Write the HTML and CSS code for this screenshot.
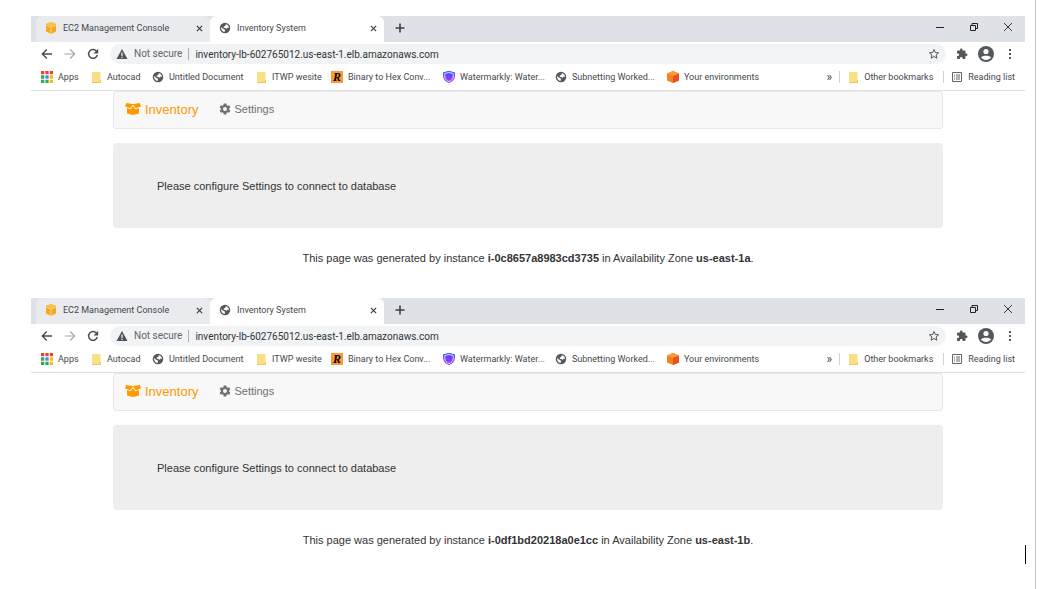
FILE: index.html
```html
<!DOCTYPE html>
<html lang="en">
<head>
<meta charset="utf-8">
<title>Inventory System</title>
<link rel="stylesheet" href="styles.css">
</head>
<body>
<svg class="sprite" aria-hidden="true">
  <symbol id="aws" viewBox="0 0 12 12"><path fill="#f6a821" d="M6 0l5 2v7.500L6 12 1 9.500V2z"/><path fill="#fcc14c" d="M6 0l5 2-5 2-5-2z"/><path fill="none" stroke="#fff" stroke-width=".5" d="M1 3l5 2 5-2M6 5v7"/></symbol>
  <symbol id="globe" viewBox="0 0 24 24"><path fill="#55595e" d="M12 1.500a10.500 10.500 0 1 0 0 21 10.500 10.500 0 0 0 0-21z"/><path fill="#fff" d="M14 4.500c4 1 6 4 6 7.500l-2.500-1-2 2.500-3-1.500-3-.5V9l3-1 .5-2zM4 10l5 4 2 .5 1 2.500-1 3C6.500 19.500 3.500 15 4 10z"/></symbol>
  <symbol id="folder" viewBox="0 0 12 12"><path fill="#fbdf85" d="M2 1h8.500v8H11v3H2z"/><path fill="#efc75e" d="M2 11h9v1H2zM10 9h1v3h-1z"/></symbol>
  <symbol id="apps" viewBox="0 0 11 11"><path fill="#ea4335" d="M0 0h3v3H0zM4 0h3v3H4zM8 0h3v3H8z"/><path fill="#34a853" d="M0 4h3v3H0zM0 8h3v3H0z"/><path fill="#4285f4" d="M4 4h3v3H4z"/><path fill="#fbbc05" d="M8 4h3v3H8zM8 8h3v3H8z"/><path fill="#34a853" d="M4 8h3v3H4z"/></symbol>
  <symbol id="shield" viewBox="0 0 12 12"><path fill="#8b3df2" d="M6 0l5.800 1.500V6C11.500 9 9 11 6 12 3 11 .5 9 .2 6V1.500z"/><path fill="#4a4cf5" d="M6 0l5.800 1.500V5H.2V1.500z"/><path fill="none" stroke="#fff" stroke-width=".8" d="M6 1.500l4.200 1V6C10 8 8.500 9.700 6 10.500 3.500 9.700 2 8 1.800 6V2.500z"/></symbol>
  <symbol id="cube" viewBox="0 0 12 12"><path fill="#f58220" d="M6 0l6 2.500v7L6 12 0 9.500v-7z"/><path fill="#fa9a3c" d="M6 0l6 2.500L6 5 0 2.500z"/><path fill="#e8521c" d="M6 5l6-2.500v7L6 12z"/></symbol>
  <symbol id="list" viewBox="0 0 12 12"><path fill="none" stroke="#62666b" d="M1.500 1.500h9v9h-9z"/><path stroke="#62666b" d="M3 4h1M5 4h4M3 6h1M5 6h4M3 8h1M5 8h4"/></symbol>
  <symbol id="x" viewBox="0 0 8 8"><path stroke="#3c4043" stroke-width="1.400" d="M1 1l6 6M7 1L1 7"/></symbol>
  <symbol id="plus" viewBox="0 0 10 10"><path stroke="#3c4043" stroke-width="1.600" d="M5 .5v9M.5 5h9"/></symbol>
  <symbol id="min" viewBox="0 0 10 10"><path stroke="#222" d="M1 5.500h8"/></symbol>
  <symbol id="restore" viewBox="0 0 10 10"><path fill="none" stroke="#222" d="M1.500 3.500h5v5h-5zM3 3V1.500h5.500v5H7"/></symbol>
  <symbol id="close" viewBox="0 0 10 10"><path stroke="#222" stroke-width=".9" d="M1 1l8 8M9 1L1 9"/></symbol>
  <symbol id="back" viewBox="0 0 12 12"><path fill="none" stroke="currentColor" stroke-width="1.400" d="M11 6H1.500M5.800 1.500L1.300 6l4.500 4.500"/></symbol>
  <symbol id="fwd" viewBox="0 0 12 12"><path fill="none" stroke="currentColor" stroke-width="1.200" d="M.5 6h10M6.200 1.500L10.700 6l-4.500 4.500"/></symbol>
  <symbol id="reload" viewBox="0 0 12 12"><path fill="none" stroke="#4a4d51" stroke-width="1.500" d="M9.700 3.500A4.400 4.400 0 1 0 10.300 7"/><path fill="#4a4d51" d="M11.200.8v4.700H6.500z"/></symbol>
  <symbol id="warn" viewBox="0 0 12 12"><path fill="#4f5358" d="M6 1l5.500 10H.5z"/><path fill="#f1f3f4" d="M5.400 4.500h1.200V8H5.400zM5.400 8.700h1.200v1.200H5.400z"/></symbol>
  <symbol id="star" viewBox="0 0 12 12"><path fill="none" stroke="#54585d" d="M6 1.500l1.300 3 3.300.3-2.500 2.100.8 3.300L6 8.500l-2.900 1.700.8-3.300L1.400 4.800l3.300-.3z"/></symbol>
  <symbol id="puzzle" viewBox="0 0 24 24"><path fill="#54585d" d="M20.500 11H19V7a2 2 0 0 0-2-2h-4V3.500a2.500 2.500 0 0 0-5 0V5H4a2 2 0 0 0-2 2v3.800h1.500a2.700 2.700 0 0 1 0 5.400H2V20c0 1.100.9 2 2 2h3.800v-1.500a2.700 2.700 0 0 1 5.400 0V22H17a2 2 0 0 0 2-2v-4h1.500a2.500 2.500 0 0 0 0-5z"/></symbol>
  <symbol id="user" viewBox="0 0 16 16"><circle cx="8" cy="8" r="8" fill="#54585d"/><circle cx="8" cy="5.500" r="2.600" fill="#fff"/><path fill="#fff" d="M3 11.500c1-2.500 9-2.500 10 0-2.500 3.200-7.500 3.200-10 0z"/></symbol>
  <symbol id="dots" viewBox="0 0 12 12"><path fill="#54585d" d="M5 1h2v2H5zM5 5h2v2H5zM5 9h2v2H5z"/></symbol>
  <symbol id="box" viewBox="0 0 16 12"><path fill="#ff9900" d="M1.200 0L8 1l6.800-1L16 3.500l-5.300 1.700L8 1.500 5.300 5.200 0 3.500zM2 5l3.700 1.200L8 3l2.300 3.200L14 5v5.500L8 12l-6-1.500z"/></symbol>
  <symbol id="gear" viewBox="0 0 24 24"><path fill="#707070" fill-rule="evenodd" d="M9.500 1h5l.6 3.200 2 1.200 3.100-1.100 2.500 4.300-2.500 2.200v2.400l2.500 2.200-2.500 4.300-3.100-1.100-2 1.200-.6 3.200h-5l-.6-3.200-2-1.200-3.100 1.100-2.500-4.300 2.500-2.200v-2.400L1.300 8.600l2.500-4.300 3.100 1.100 2-1.200zM12 8a4 4 0 1 0 0 8 4 4 0 0 0 0-8z"/></symbol>
</svg>

<main class="document">
  <section class="browser">
    <div class="tabs">
      <div class="tab"><svg class="icon"><use href="#aws"/></svg><span class="tab-title">EC2 Management Console</span><button class="tab-close" aria-label="Close tab"><svg><use href="#x"/></svg></button></div>
      <div class="tab active"><svg class="icon"><use href="#globe"/></svg><span class="tab-title">Inventory System</span><button class="tab-close" aria-label="Close tab"><svg><use href="#x"/></svg></button></div>
      <button class="new-tab" aria-label="New tab"><svg><use href="#plus"/></svg></button>
      <div class="controls">
        <button aria-label="Minimize"><svg><use href="#min"/></svg></button><button aria-label="Restore"><svg><use href="#restore"/></svg></button><button aria-label="Close"><svg><use href="#close"/></svg></button>
      </div>
    </div>
    <div class="toolbar">
      <button class="nav-button" aria-label="Back"><svg class="icon"><use href="#back"/></svg></button>
      <button class="nav-button faded" aria-label="Forward"><svg class="icon"><use href="#fwd"/></svg></button>
      <button class="nav-button" aria-label="Reload"><svg class="icon"><use href="#reload"/></svg></button>
      <div class="address">
        <svg class="icon"><use href="#warn"/></svg><span class="secure">Not secure</span>
        <input class="url" aria-label="Address" value="inventory-lb-602765012.us-east-1.elb.amazonaws.com">
        <button aria-label="Bookmark"><svg class="icon"><use href="#star"/></svg></button>
      </div>
      <div class="actions">
        <button aria-label="Extensions"><svg class="icon"><use href="#puzzle"/></svg></button><button aria-label="Profile"><svg class="avatar"><use href="#user"/></svg></button><button aria-label="Menu"><svg class="icon"><use href="#dots"/></svg></button>
      </div>
    </div>
    <nav class="bookmarks" aria-label="Bookmarks">
      <div class="bookmark-list">
        <a href="#"><svg class="icon"><use href="#apps"/></svg>Apps</a>
        <a href="#"><svg class="icon"><use href="#folder"/></svg>Autocad</a>
        <a href="#"><svg class="icon"><use href="#globe"/></svg>Untitled Document</a>
        <a href="#"><svg class="icon"><use href="#folder"/></svg>ITWP wesite</a>
        <a href="#"><span class="r-icon">R</span>Binary to Hex Conv...</a>
        <a href="#"><svg class="icon"><use href="#shield"/></svg>Watermarkly: Water...</a>
        <a href="#"><svg class="icon"><use href="#globe"/></svg>Subnetting Worked...</a>
        <a href="#"><svg class="icon"><use href="#cube"/></svg>Your environments</a>
      </div>
      <button class="more" aria-label="More bookmarks">»</button>
      <a class="divided other" href="#"><svg class="icon"><use href="#folder"/></svg>Other bookmarks</a>
      <a class="divided" href="#"><svg class="icon"><use href="#list"/></svg>Reading list</a>
    </nav>
    <div class="page">
      <nav class="navbar"><a class="brand" href="#"><svg><use href="#box"/></svg>Inventory</a><a class="settings" href="#"><svg class="icon"><use href="#gear"/></svg>Settings</a></nav>
      <div class="notice">Please configure Settings to connect to database</div>
      <p class="generated">This page was generated by instance <b>i-0c8657a8983cd3735</b> in Availability Zone <b>us-east-1a</b>.</p>
    </div>
  </section>

  <section class="browser">
    <div class="tabs">
      <div class="tab"><svg class="icon"><use href="#aws"/></svg><span class="tab-title">EC2 Management Console</span><button class="tab-close" aria-label="Close tab"><svg><use href="#x"/></svg></button></div>
      <div class="tab active"><svg class="icon"><use href="#globe"/></svg><span class="tab-title">Inventory System</span><button class="tab-close" aria-label="Close tab"><svg><use href="#x"/></svg></button></div>
      <button class="new-tab" aria-label="New tab"><svg><use href="#plus"/></svg></button>
      <div class="controls">
        <button aria-label="Minimize"><svg><use href="#min"/></svg></button><button aria-label="Restore"><svg><use href="#restore"/></svg></button><button aria-label="Close"><svg><use href="#close"/></svg></button>
      </div>
    </div>
    <div class="toolbar">
      <button class="nav-button" aria-label="Back"><svg class="icon"><use href="#back"/></svg></button>
      <button class="nav-button faded" aria-label="Forward"><svg class="icon"><use href="#fwd"/></svg></button>
      <button class="nav-button" aria-label="Reload"><svg class="icon"><use href="#reload"/></svg></button>
      <div class="address">
        <svg class="icon"><use href="#warn"/></svg><span class="secure">Not secure</span>
        <input class="url" aria-label="Address" value="inventory-lb-602765012.us-east-1.elb.amazonaws.com">
        <button aria-label="Bookmark"><svg class="icon"><use href="#star"/></svg></button>
      </div>
      <div class="actions">
        <button aria-label="Extensions"><svg class="icon"><use href="#puzzle"/></svg></button><button aria-label="Profile"><svg class="avatar"><use href="#user"/></svg></button><button aria-label="Menu"><svg class="icon"><use href="#dots"/></svg></button>
      </div>
    </div>
    <nav class="bookmarks" aria-label="Bookmarks">
      <div class="bookmark-list">
        <a href="#"><svg class="icon"><use href="#apps"/></svg>Apps</a>
        <a href="#"><svg class="icon"><use href="#folder"/></svg>Autocad</a>
        <a href="#"><svg class="icon"><use href="#globe"/></svg>Untitled Document</a>
        <a href="#"><svg class="icon"><use href="#folder"/></svg>ITWP wesite</a>
        <a href="#"><span class="r-icon">R</span>Binary to Hex Conv...</a>
        <a href="#"><svg class="icon"><use href="#shield"/></svg>Watermarkly: Water...</a>
        <a href="#"><svg class="icon"><use href="#globe"/></svg>Subnetting Worked...</a>
        <a href="#"><svg class="icon"><use href="#cube"/></svg>Your environments</a>
      </div>
      <button class="more" aria-label="More bookmarks">»</button>
      <a class="divided other" href="#"><svg class="icon"><use href="#folder"/></svg>Other bookmarks</a>
      <a class="divided" href="#"><svg class="icon"><use href="#list"/></svg>Reading list</a>
    </nav>
    <div class="page">
      <nav class="navbar"><a class="brand" href="#"><svg><use href="#box"/></svg>Inventory</a><a class="settings" href="#"><svg class="icon"><use href="#gear"/></svg>Settings</a></nav>
      <div class="notice">Please configure Settings to connect to database</div>
      <p class="generated">This page was generated by instance <b>i-0df1bd20218a0e1cc</b> in Availability Zone <b>us-east-1b</b>.</p>
    </div>
  </section>
  <span class="caret"></span>
</main>
</body>
</html>
```

FILE: styles.css
```css
* { box-sizing: border-box; }
body { margin: 0; background: #fff; font-family: Roboto, "Open Sans", sans-serif; font-size: 9px; color: #45484c; }
a { color: inherit; text-decoration: none; }
button { display: flex; align-items: center; justify-content: center; padding: 0; border: 0; background: none; color: inherit; font: inherit; }
svg { display: block; flex: none; }
.sprite { position: absolute; width: 0; height: 0; }
.icon { width: 12px; height: 12px; }

.document { position: relative; min-height: 100vh; margin-right: 25px; padding: 16px 10px 0 31px; border-right: 1px solid #c3c3c3; }
.browser { margin-bottom: 32px; }
.browser:last-of-type { margin-bottom: 0; }
.caret { position: absolute; right: 9px; bottom: 25px; width: 1px; height: 19px; background: #000; }

.tabs { display: flex; height: 26px; padding-left: 5px; background: #dee1e6; }
.tab { display: flex; align-items: center; width: 174px; padding: 0 6px 2px 9px; gap: 6px; border-radius: 6px 6px 0 0; background: #e9ebef; }
.tab.active { background: #fff; }
.tab-title { flex: 1; white-space: nowrap; }
.tab-close { width: 10px; height: 12px; }
.tab-close svg { width: 7px; height: 7px; }
.new-tab { width: 32px; padding-bottom: 2px; }
.new-tab svg { width: 10px; height: 10px; }
.controls { display: flex; margin-left: auto; height: 22px; }
.controls button { width: 34px; }
.controls svg { width: 10px; height: 10px; }

.toolbar { display: flex; align-items: center; height: 24px; padding-left: 4px; }
.nav-button { width: 23px; color: #4a4d51; }
.nav-button.faded { color: #a5a8ab; }
.address { display: flex; align-items: center; flex: 1; height: 20px; margin-left: 6px; padding: 0 6px; border-radius: 10px; background: #f1f3f4; font-size: 10px; }
.secure { margin-left: 6px; padding-right: 6px; border-right: 1px solid #a9acb0; line-height: 12px; color: #62666b; white-space: nowrap; }
.url { flex: 1; min-width: 0; padding: 0 0 0 6px; border: 0; outline: 0; background: none; color: #303337; font: inherit; }
.actions { display: flex; width: 79px; padding-left: 4px; }
.actions button { width: 24px; }
.avatar { width: 16px; height: 16px; }

.bookmarks { display: flex; align-items: center; height: 25px; padding: 0 10px 2px; border-bottom: 1px solid #dcdee0; white-space: nowrap; }
.bookmarks a { display: flex; align-items: center; gap: 5px; }
.bookmark-list { display: grid; grid-template-columns: 49px 62px 103px 76px 112px 112px 112px auto; }
.r-icon { width: 12px; height: 12px; background: #fb9a37; color: #000; font: italic bold 12px/12px "Liberation Serif", serif; text-align: center; }
.more { margin-left: auto; font-size: 12px; }
.bookmarks .divided { margin-left: 7px; padding-left: 7px; border-left: 1px solid #d0d2d5; }
.bookmarks .other { padding-right: 3px; }

.page { padding: 0 82px; font-family: "Liberation Sans", Arial, sans-serif; font-size: 11px; color: #333; }
.navbar { display: flex; align-items: center; height: 38px; padding: 0 11px 2px; border: 1px solid #e7e7e7; border-radius: 3px; background: #f8f8f8; }
.brand { display: flex; align-items: center; gap: 4px; color: #ff9900; font-size: 13px; }
.brand svg { width: 16px; height: 12px; }
.settings { display: flex; align-items: center; gap: 3px; margin-left: 21px; color: #707070; }
.notice { margin-top: 14px; padding: 37px 44px 35px; border-radius: 4px; background: #eee; line-height: 13px; }
.generated { margin: 22px 0 0; line-height: 16px; text-align: center; }
```
